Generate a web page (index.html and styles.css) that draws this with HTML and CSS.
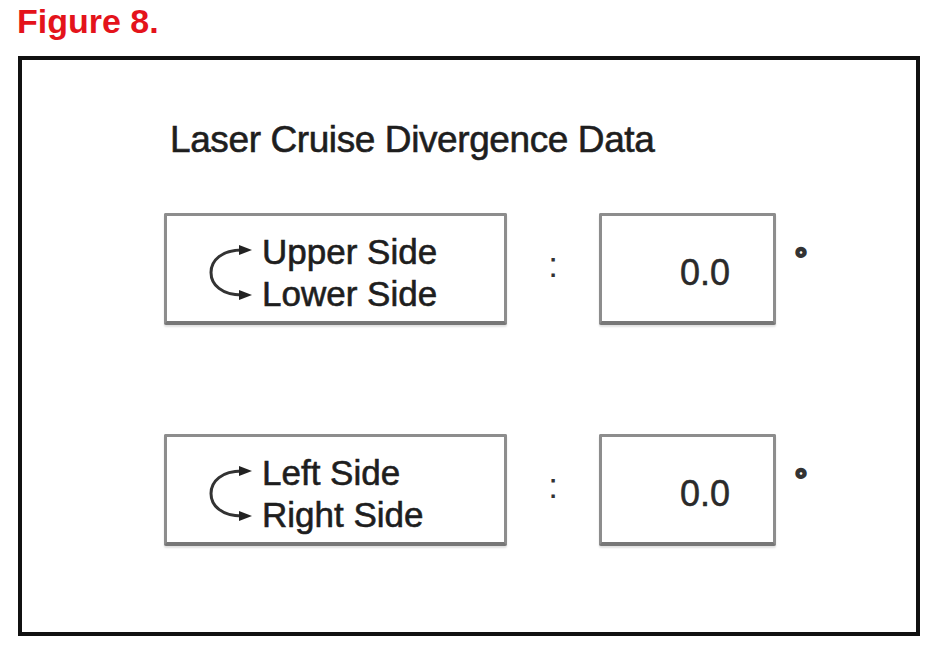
FILE: index.html
```html
<!DOCTYPE html>
<html lang="en">
<head>
    <meta charset="UTF-8">
    <meta name="viewport" content="width=device-width, initial-scale=1.0">
    <title>Figure 8 - Laser Cruise Divergence Data</title>
    <link rel="stylesheet" href="styles.css">
</head>
<body>
    <h1 class="fig-label">Figure 8.</h1>

    <div class="frame">
        <h2 class="panel-title">Laser Cruise Divergence Data</h2>

        <div class="data-grid">
            <div class="side-box">
                <svg class="swap-icon" width="44" height="60" viewBox="0 0 44 60">
                    <path d="M34 7 C14 7 3 17 3 29.5 C3 42 14 52 34 52" fill="none" stroke="#333" stroke-width="3"/>
                    <polygon points="31,2 44,7 31,12" fill="#222"/>
                    <polygon points="31,47 44,52 31,57" fill="#222"/>
                </svg>
                <div class="side-text">
                    <div>Upper Side</div>
                    <div>Lower Side</div>
                </div>
            </div>
            <span class="colon">:</span>
            <div class="value-box">0.0</div>
            <span class="deg">°</span>

            <div class="side-box">
                <svg class="swap-icon" width="44" height="60" viewBox="0 0 44 60">
                    <path d="M34 7 C14 7 3 17 3 29.5 C3 42 14 52 34 52" fill="none" stroke="#333" stroke-width="3"/>
                    <polygon points="31,2 44,7 31,12" fill="#222"/>
                    <polygon points="31,47 44,52 31,57" fill="#222"/>
                </svg>
                <div class="side-text">
                    <div>Left Side</div>
                    <div>Right Side</div>
                </div>
            </div>
            <span class="colon">:</span>
            <div class="value-box">0.0</div>
            <span class="deg">°</span>
        </div>
    </div>
</body>
</html>
```

FILE: styles.css
```css
body {
    margin: 0;
    background-color: #ffffff;
    font-family: "Liberation Sans", Arial, sans-serif;
    color: #1e1e1e;
}

.fig-label {
    margin: 2px 0 16px 17px;
    font-size: 34px;
    line-height: 38px;
    font-weight: bold;
    color: #e4131b;
}

.frame {
    box-sizing: border-box;
    width: 902px;
    height: 580px;
    margin-left: 18px;
    border: 4px solid #111;
    padding: 59px 0 0 142px;
}

.panel-title {
    margin: 0 0 52px 6px;
    font-size: 37px;
    line-height: 42px;
    font-weight: normal;
    letter-spacing: -0.4px;
    -webkit-text-stroke: 0.6px #1e1e1e;
}

.data-grid {
    display: grid;
    grid-template-columns: 343px 92px 177px auto;
    grid-auto-rows: 112px;
    row-gap: 109px;
}

.side-box,
.value-box {
    box-sizing: border-box;
    border: 3px solid #8d8d8d;
    border-bottom: 4px solid #777;
    border-radius: 2px;
    box-shadow: 0 2px 2px rgba(0, 0, 0, 0.12);
    background: #fff;
}

.side-box {
    display: flex;
    align-items: center;
    gap: 10px;
    padding: 8px 0 0 41px;
}

.side-text {
    font-size: 35px;
    line-height: 42px;
    -webkit-text-stroke: 0.6px #1e1e1e;
}

.colon {
    align-self: center;
    justify-self: center;
    margin-bottom: 9px;
    font-size: 35px;
    line-height: 42px;
    color: #333;
}

.value-box {
    display: flex;
    align-items: center;
    justify-content: flex-end;
    padding: 8px 43px 0 0;
    font-size: 36px;
    line-height: 42px;
    color: #2a2a2a;
    -webkit-text-stroke: 0.5px #2a2a2a;
}

.deg {
    align-self: start;
    margin: 31px 0 0 19px;
    font-size: 30px;
    line-height: 30px;
    font-weight: bold;
    color: #333;
    -webkit-text-stroke: 2px #333;
}
```
